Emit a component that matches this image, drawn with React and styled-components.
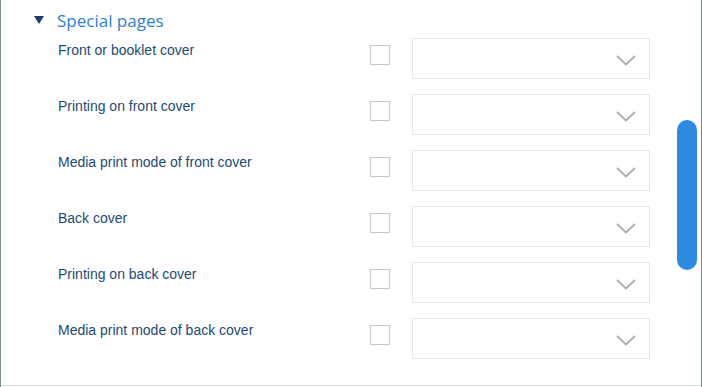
import React, { useState } from "react";
import styled, { createGlobalStyle } from "styled-components";

const GlobalStyle = createGlobalStyle`
    html, body {
        margin:0;
        padding:0;
        background:#ffffff;
    }
    * {
        box-sizing:border-box;
    }
`

const Frame = styled.div`
    width:702px;
    height:387px;

    border-left:1px solid #7d8f8f;
    border-right:1px solid #758888;
    background:#ffffff;
    font-family:"Liberation Sans", Arial, sans-serif;
`

const Body = styled.div`
    display:flex;
    height:386px;
    border-bottom:1px solid #d9d9d9;
`

const Main = styled.div`
    display:flex;
    flex-direction:column;
    flex:1;
`

const SectionHeader = styled.div`
    display:flex;
    align-items:center;
    height:38px;
    padding-left:33px;
    padding-top:2px;
`

const Triangle = styled.span`
    width:0;
    height:0;
    margin-right:13px;

    border-left:5.5px solid transparent;
    border-right:5.5px solid transparent;
    border-top:8px solid #1b3f66;
`

const SectionTitle = styled.h2`
    margin:0;
    font-family:"Open Sans", "Liberation Sans", sans-serif;
    font-size:17px;
    font-weight:400;
    color:#2b7fd4;
`

const Row = styled.div`
    display:grid;
    grid-template-columns:312px 42px 238px;
    align-items:start;
    height:56px;
    padding-left:57px;
`

const Label = styled.span`
    margin-top:4px;
    font-size:14px;
    line-height:17px;
    color:#234a74;
`

const CheckBox = styled.button`
    width:20px;
    height:20px;
    margin-top:7px;
    padding:0;

    border:1px solid #c4c6c6;
    background:${(props) => (props.checked ? "#2b7fd4" : "#ffffff")};
    cursor:pointer;
`

const Select = styled.div`
    display:flex;
    align-items:center;
    justify-content:flex-end;
    height:41px;
    padding-right:12px;
    padding-top:4px;

    border:1px solid #e6e6e6;
    background:#ffffff;
`

const ScrollTrack = styled.div`
    width:24px;
    padding-top:120px;
`

const ScrollThumb = styled.div`
    width:20px;
    height:150px;
    border-radius:10px;
    background:#2d8ae0;
`

const Chevron = () => (
    <svg width="22" height="13" viewBox="0 0 22 13">
        <polyline points="2,2 11,10.5 20,2" fill="none" stroke="#abb1b1" strokeWidth="1.8" />
    </svg>
)

const rows = [
    "Front or booklet cover",
    "Printing on front cover",
    "Media print mode of front cover",
    "Back cover",
    "Printing on back cover",
    "Media print mode of back cover",
]

function App() {
    const [checked, setChecked] = useState({});

    return (
        <>
            <GlobalStyle />
            <Frame>
                <Body>
                    <Main>
                        <SectionHeader>
                            <Triangle />
                            <SectionTitle>Special pages</SectionTitle>
                        </SectionHeader>

                        {rows.map((name) => (
                            <Row key={name}>
                                <Label>{name}</Label>
                                <CheckBox
                                    checked={checked[name]}
                                    onClick={() => setChecked({ ...checked, [name]: !checked[name] })}
                                />
                                <Select>
                                    <Chevron />
                                </Select>
                            </Row>
                        ))}
                    </Main>

                    <ScrollTrack>
                        <ScrollThumb />
                    </ScrollTrack>
                </Body>
            </Frame>
        </>
    )
}

export default App;
